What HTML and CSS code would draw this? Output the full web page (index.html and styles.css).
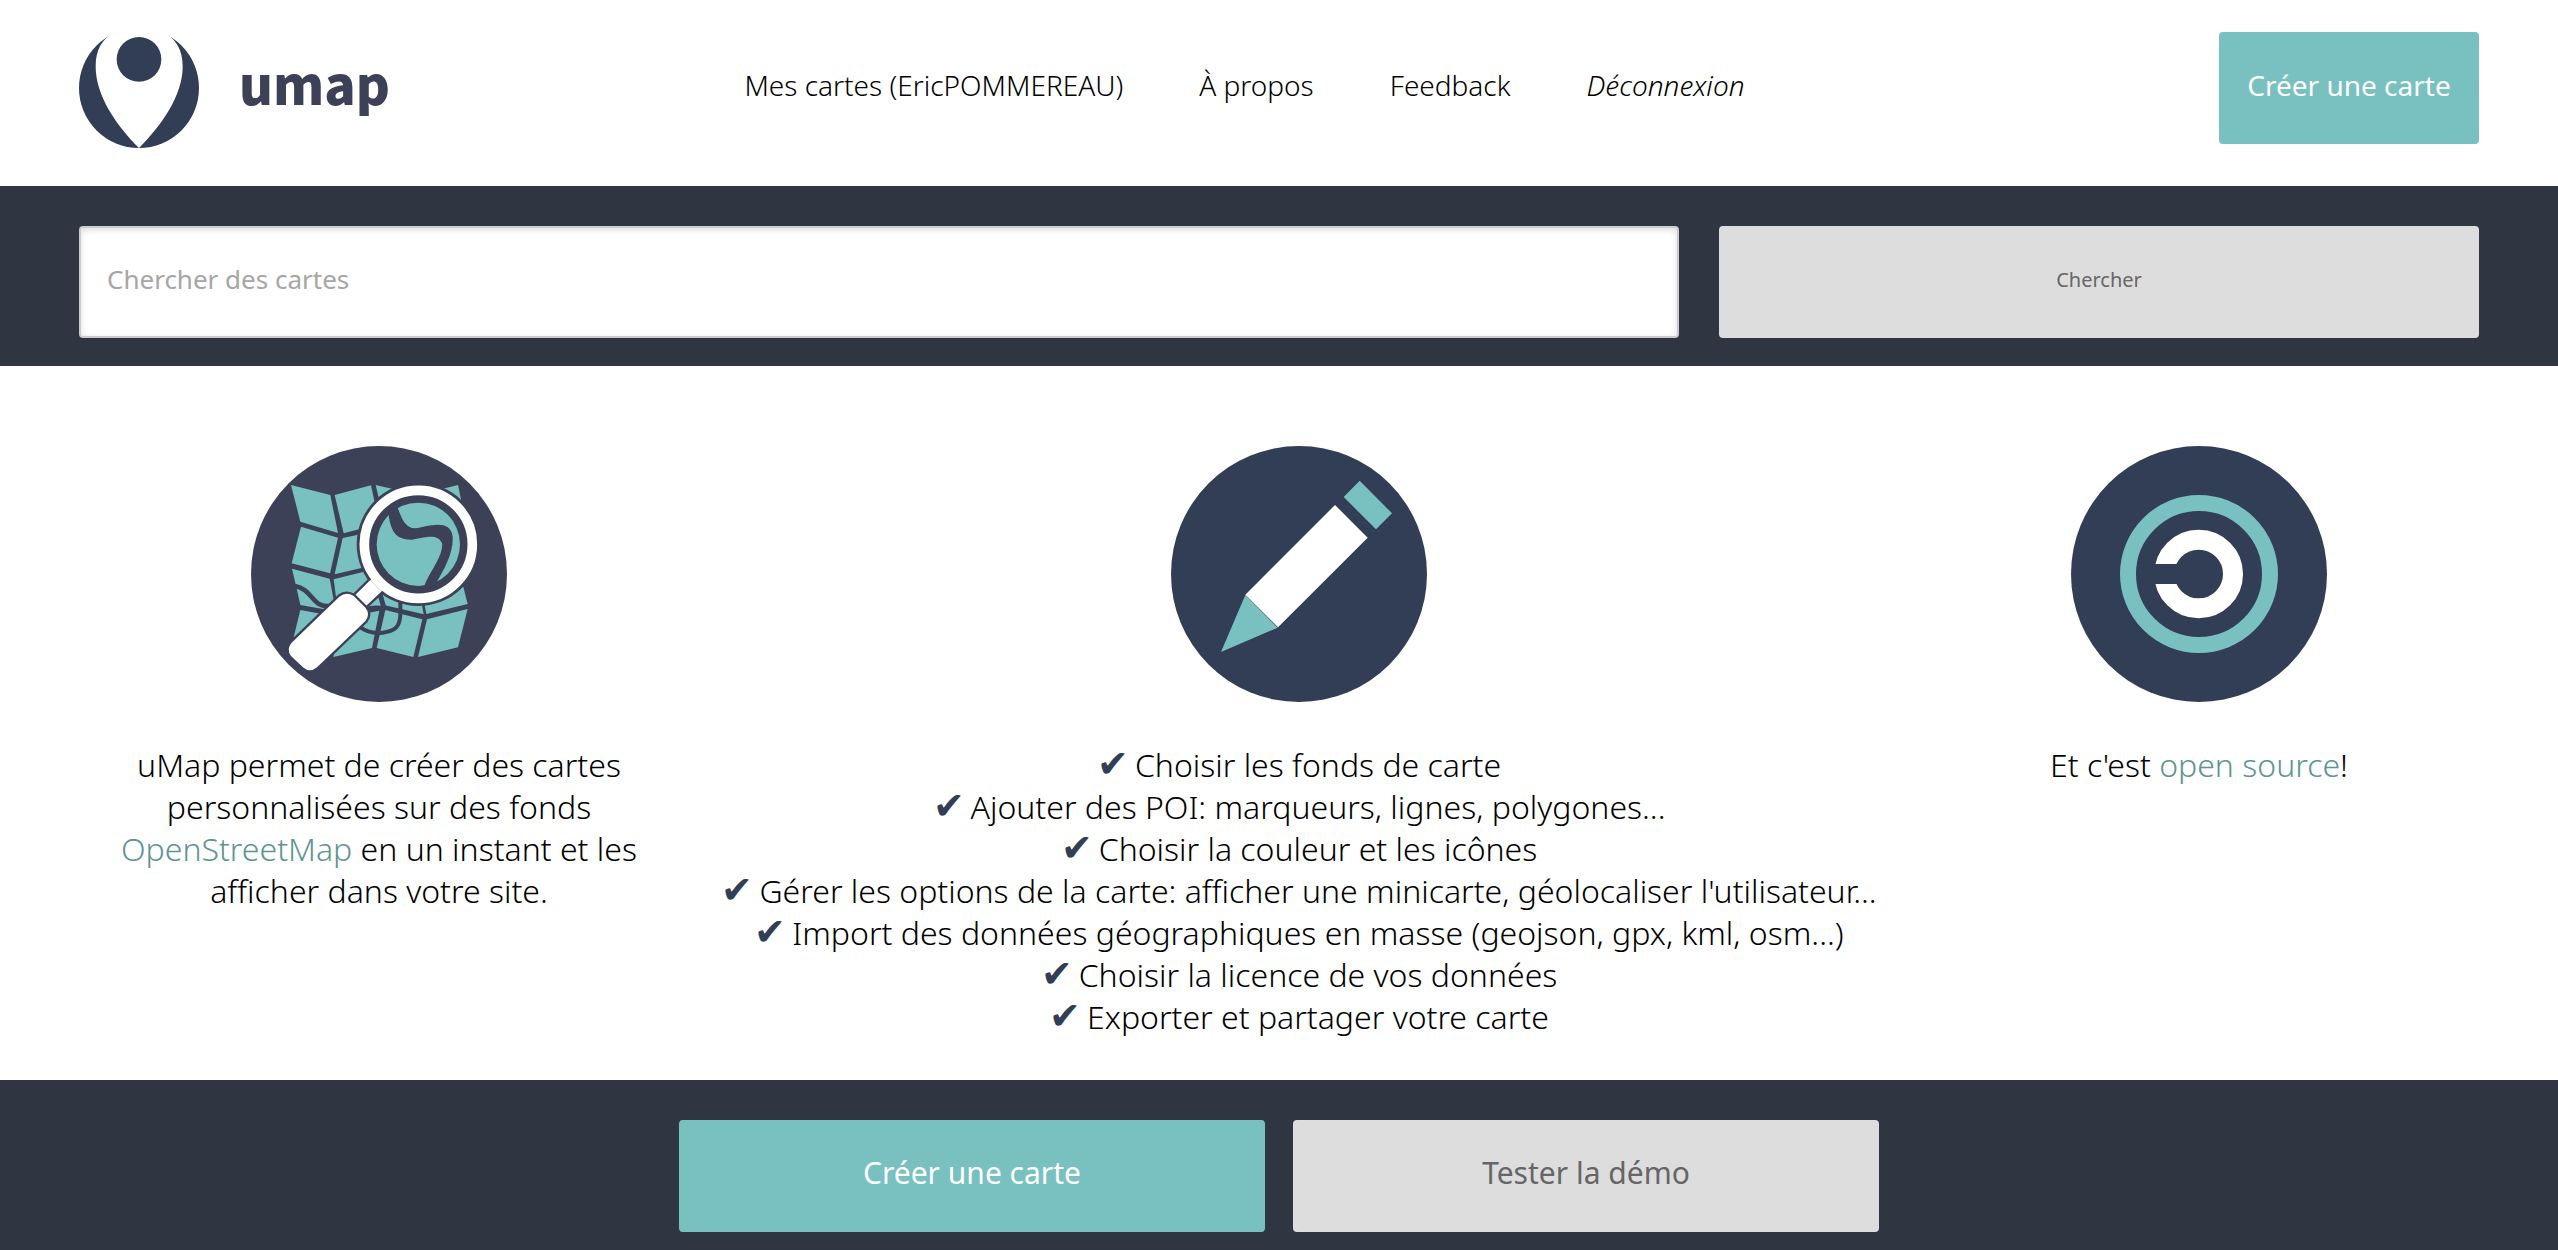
FILE: index.html
```
<!DOCTYPE html>
<html lang="fr">
<head>
<meta charset="utf-8">
<meta name="viewport" content="width=device-width, initial-scale=1">
<title>uMap</title>
<link rel="stylesheet" href="styles.css">
</head>
<body>
<header class="wrap header">
  <a class="brand" href="#">
    <svg class="brand-logo" viewBox="114 84 360 360" aria-hidden="true">
      <circle cx="294" cy="264" r="180" fill="#323e56"/>
      <path d="M294 444C226 376 164 286 164 200C164 150 182 117 221 97L221 80H367L367 97C406 117 425 150 425 200C425 286 362 376 294 444Z" fill="#fff"/>
      <circle cx="294" cy="178" r="67" fill="#323e56"/>
    </svg>
    <span class="brand-name">umap</span>
  </a>
  <nav class="nav">
    <a href="#">Mes cartes (EricPOMMEREAU)</a>
    <a href="#">À propos</a>
    <a href="#">Feedback</a>
    <a class="logout" href="#">Déconnexion</a>
  </nav>
  <a class="button header-button" href="#">Créer une carte</a>
</header>

<section class="band search-band">
  <form class="wrap search">
    <input class="search-input" type="search" placeholder="Chercher des cartes" aria-label="Chercher des cartes">
    <button class="button neutral search-button" type="submit">Chercher</button>
  </form>
</section>

<main class="wrap features">
  <section class="feature">
    <svg class="feature-icon" viewBox="90 78 768 768" aria-hidden="true">
      <circle cx="474" cy="462" r="384" fill="#3d4158"/>
      <g fill="#79c0c0">
        <path d="M210 195L328 225L351 339L238 305Z"/>
        <path d="M341 225L450 196L475 312L368 340Z"/>
        <path d="M464 195L580 222L600 330L490 305Z"/>
        <path d="M590 225L711 195L735 310L610 330Z"/>
        <path d="M240 320L351 353L327 460L212 430Z"/>
        <path d="M365 354L480 330L460 435L341 463Z"/>
        <path d="M213 446L326 476L342 560L310 568L238 555L228 510Z"/>
        <path d="M338 478L450 450L480 560L352 585Z"/>
        <path d="M238 570L320 585L218 652Z"/>
        <path d="M360 595L475 572L453 684L337 711Z"/>
        <path d="M493 570L604 598L577 711L467 684Z"/>
        <path d="M618 598L740 567L711 682L591 711Z"/>
        <path d="M482 510L600 540L608 583L492 556Z"/>
        <path d="M608 540L727 500L740 552L616 582Z"/>
      </g>
      <g fill="none" stroke="#3d4158">
        <path d="M222 498C275 508 275 565 325 558" stroke-width="14"/>
        <path d="M538 540V585C536 625 518 633 485 638C455 642 435 635 415 620" stroke-width="12"/>
        <path d="M474 510L488 556L480 575M436 568C455 560 475 562 492 566" stroke-width="12"/>
      </g>
      <circle cx="592" cy="373" r="185" fill="#3d4158"/>
      <path d="M448 480L482 514L435 558L402 526Z" fill="#fff" stroke="#3d4158" stroke-width="14" paint-order="stroke"/>
      <circle cx="592" cy="373" r="162" fill="none" stroke="#fff" stroke-width="29"/>
      <path d="M448 480L470 470L495 500L482 514Z" fill="#fff"/>
      <circle cx="592" cy="373" r="125" fill="#79c0c0"/>
      <path d="M502 280C510 338 525 358 570 359C600 356 650 335 663 370C668 410 620 462 608 505L645 490C668 450 698 400 695 350C690 308 650 310 600 322C558 335 545 305 528 258Z" fill="#3d4158"/>
      <path d="M355 530Q376 514 398 528L432 562Q449 582 434 602L288 742Q266 760 246 742L210 708Q195 688 212 668Z" fill="#fff" stroke="#3d4158" stroke-width="14" paint-order="stroke"/>
    </svg>
    <p class="feature-text">uMap permet de créer des cartes personnalisées sur des fonds <a href="#">OpenStreetMap</a> en un instant et les afficher dans votre site.</p>
  </section>

  <section class="feature">
    <svg class="feature-icon" viewBox="90 78 768 768" aria-hidden="true">
      <circle cx="474" cy="462" r="384" fill="#323e56"/>
      <path d="M656 182L753 280L705 328L608 231Z" fill="#79c0c0"/>
      <path d="M582 255L680 353L411 622L313 524Z" fill="#fff"/>
      <path d="M313 525L410 623L240 696Z" fill="#79c0c0"/>
    </svg>
    <ul class="feature-text checks">
      <li>Choisir les fonds de carte</li>
      <li>Ajouter des POI: marqueurs, lignes, polygones...</li>
      <li>Choisir la couleur et les icônes</li>
      <li>Gérer les options de la carte: afficher une minicarte, géolocaliser l'utilisateur...</li>
      <li>Import des données géographiques en masse (geojson, gpx, kml, osm...)</li>
      <li>Choisir la licence de vos données</li>
      <li>Exporter et partager votre carte</li>
    </ul>
  </section>

  <section class="feature">
    <svg class="feature-icon" viewBox="90 78 768 768" aria-hidden="true">
      <circle cx="474" cy="462" r="384" fill="#323e56"/>
      <circle cx="474" cy="462" r="213" fill="none" stroke="#79c0c0" stroke-width="48"/>
      <circle cx="473" cy="462" r="103" fill="none" stroke="#fff" stroke-width="60"/>
      <path d="M335 432H420V492H335Z" fill="#323e56"/>
    </svg>
    <p class="feature-text">Et c'est <a href="#">open source</a>!</p>
  </section>
</main>

<section class="band actions-band">
  <div class="actions">
    <a class="button" href="#">Créer une carte</a>
    <a class="button neutral" href="#">Tester la démo</a>
  </div>
</section>
</body>
</html>
```
FILE: styles.css
```
* {
  box-sizing: border-box;
}

body {
  margin: 0;
  background: #fff;
  color: #000;
  font-family: "Noto Sans", "Open Sans", sans-serif;
  font-size: 32px;
  font-weight: 300;
  line-height: 42px;
}

a {
  color: #5f9494;
  text-decoration: none;
}

.wrap {
  max-width: 2400px;
  margin: 0 auto;
}

.header {
  display: flex;
  align-items: center;
  padding: 28px 0 38px;
}

.brand {
  display: flex;
  align-items: center;
  gap: 40px;
}

.brand-logo {
  display: block;
  width: 120px;
  height: 120px;
}

.brand-name {
  color: #3d4158;
  font-family: "Noto Sans CJK SC", "Noto Sans", sans-serif;
  font-size: 52px;
  font-weight: 900;
  line-height: 80px;
  padding-bottom: 10px;
}

.nav {
  flex: 1;
  display: flex;
  justify-content: center;
  gap: 76px;
  padding: 0 120px 6px 0;
  font-size: 28px;
}

.nav a {
  color: #000;
}

.logout {
  font-style: italic;
}

.button {
  display: flex;
  align-items: center;
  justify-content: center;
  height: 112px;
  padding: 0 32px 6px;
  border: 0;
  border-radius: 4px;
  background: #79c0c0;
  color: #fff;
  font-family: inherit;
  font-size: 30px;
  font-weight: 400;
}

.neutral {
  background: #ddd;
  color: #666;
}

.header-button {
  width: 260px;
  font-size: 28px;
  padding: 0 0 6px;
}

.band {
  background: #2f3541;
}

.search-band {
  padding: 40px 0 28px;
}

.search {
  display: grid;
  grid-template-columns: 40fr 19fr;
  gap: 40px;
}

.search-input {
  width: 100%;
  height: 112px;
  padding: 0 26px 6px;
  border: 2px solid #ccc;
  border-radius: 4px;
  background: #fff;
  box-shadow: inset 0 2px 6px #ddd;
  color: #333;
  font-family: inherit;
  font-size: 26px;
  font-weight: 400;
}

.search-input::placeholder {
  color: #a6a6a6;
}

.search-button {
  font-size: 20px;
}

.features {
  display: grid;
  grid-template-columns: 15fr 29fr 14fr;
  gap: 40px;
  padding: 80px 0 42px;
}

.feature {
  display: flex;
  flex-direction: column;
  align-items: center;
  gap: 42px;
}

.feature-icon {
  display: block;
  width: 256px;
  height: 256px;
}

.feature-text {
  margin: 0;
  padding: 0;
  text-align: center;
}

.checks {
  list-style: none;
}

.checks li::before {
  content: "✔";
  margin-right: 6px;
  color: #323e56;
  font-family: "DejaVu Sans", sans-serif;
  font-size: 38px;
  line-height: 32px;
}

.actions-band {
  padding: 40px 0 18px;
}

.actions {
  display: grid;
  grid-template-columns: 1fr 1fr;
  gap: 28px;
  max-width: 1200px;
  margin: 0 auto;
}
```
